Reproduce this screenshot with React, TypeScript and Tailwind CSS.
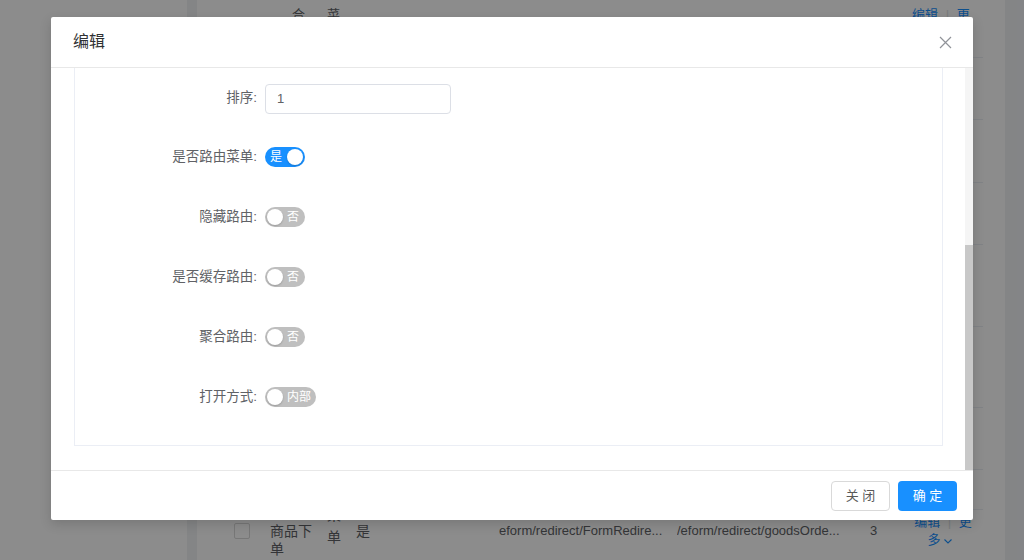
import React from 'react';

type SwitchProps = { on: boolean; label: string; wide?: boolean };

function Toggle({ on, label, wide }: SwitchProps) {
  const width = wide ? 'w-[51px]' : 'w-[40px]';
  if (on) {
    return (
      <div className={`flex h-[20px] ${width} items-center rounded-full bg-[#1890ff]`}>
        <span className="pl-[5px] text-[12px] leading-none text-white">{label}</span>
        <span className="ml-auto mr-[2px] h-[16px] w-[16px] rounded-full bg-white shadow-[0_1px_2px_rgba(0,0,0,0.2)]" />
      </div>
    );
  }
  return (
    <div className={`flex h-[20px] ${width} items-center rounded-full bg-[#bfbfbf]`}>
      <span className="ml-[2px] h-[16px] w-[16px] rounded-full bg-white shadow-[0_1px_2px_rgba(0,0,0,0.2)]" />
      <span className="ml-[4px] text-[12px] leading-none text-white">{label}</span>
    </div>
  );
}

function FormRow({ label, children, first }: { label: string; children: React.ReactNode; first?: boolean }) {
  return (
    <div className={`flex h-[60px] items-center ${first ? 'pt-[3px]' : ''}`}>
      <div className="w-[190px] shrink-0 pr-[8px] text-right text-[13.5px] text-[#606266]">{label}:</div>
      {children}
    </div>
  );
}

const switches = [
  { label: '是否路由菜单', on: true, text: '是' },
  { label: '隐藏路由', on: false, text: '否' },
  { label: '是否缓存路由', on: false, text: '否' },
  { label: '聚合路由', on: false, text: '否' },
  { label: '打开方式', on: false, text: '内部', wide: true },
];

const rowHeights = ['h-[58px]', 'h-[62px]', 'h-[63px]', 'h-[62px]', 'h-[82px]', 'h-[81px]', 'h-[62px]', 'h-[40px]'];

function Chevron() {
  return (
    <svg width="10" height="10" viewBox="0 0 10 10" fill="none" className="ml-[2px] inline-block">
      <path d="M1.5 3.5L5 7L8.5 3.5" stroke="#1890ff" strokeWidth="1.1" />
    </svg>
  );
}

function BackgroundTable() {
  return (
    <div className="flex h-full">
      <div className="w-[187px] bg-white" />
      <div className="w-[10px] bg-[#f0f2f5]" />
      <div className="w-[808px] bg-white pl-[16px] pr-[22px]">
        {rowHeights.map((h, i) => (
          <div key={i} className={`${h} border-b border-[#ebeef5] text-[13px] text-[#606266]`}>
            {i === 0 && (
              <div className="flex pt-[5px] leading-[20px]">
                <div className="w-[57px]" />
                <div className="w-[57px] pl-[22px]">合</div>
                <div className="w-[29px]">菜</div>
                <div className="w-[556px]" />
                <div className="w-[62px] text-[#1890ff]">
                  编辑 <span className="px-[4px] text-[#dcdfe6]">|</span> 更
                </div>
              </div>
            )}
          </div>
        ))}
        <div className="flex items-start text-[13px] text-[#606266]">
          <div className="w-[57px] pl-[21px] pt-[13px]">
            <div className="h-[16px] w-[16px] rounded-[2px] border border-[#d9d9d9] bg-white" />
          </div>
          <div className="w-[57px] pt-[12px] leading-[18px]">
            <div className="w-[42px] text-[14px]">商品下单</div>
          </div>
          <div className="w-[29px] -mt-[6px] leading-[22px]">
            <div className="w-[14px] text-[14px]">菜单</div>
          </div>
          <div className="w-[143px] pt-[12px] text-[14px] leading-[18px]">是</div>
          <div className="w-[178px] overflow-hidden whitespace-nowrap pt-[12px] leading-[18px]">eform/redirect/FormRedire...</div>
          <div className="w-[193px] overflow-hidden whitespace-nowrap pt-[12px] leading-[18px]">/eform/redirect/goodsOrde...</div>
          <div className="w-[42px] pt-[12px] leading-[18px]">3</div>
          <div className="w-[62px] pt-[3px] text-center leading-[18px] text-[#1890ff]">
            <div className="whitespace-nowrap">
              编辑 <span className="px-[4px] text-[#dcdfe6]">|</span> 更
            </div>
            <div className="pr-[6px]">
              多<Chevron />
            </div>
          </div>
        </div>
      </div>
      <div className="flex-1 bg-[#f0f2f5]" />
    </div>
  );
}

export default function App() {
  return (
    <div className="relative h-[560px] w-[1024px] overflow-hidden bg-white font-['Liberation_Sans','Noto_Sans_CJK_SC',sans-serif]">
      <BackgroundTable />
      <div className="absolute inset-0 bg-black/45" />

      <div className="absolute left-[51px] top-[17px] flex h-[503px] w-[922px] flex-col rounded-[2px] bg-white shadow-[0_4px_12px_rgba(0,0,0,0.15)]">
        <div className="flex h-[51px] shrink-0 items-center justify-between border-b border-[#e8e8e8] pl-[22px] pr-[21px]">
          <span className="text-[16px] text-[#303133]">编辑</span>
          <svg width="13" height="13" viewBox="0 0 13 13" fill="none">
            <path d="M1 1L12 12M12 1L1 12" stroke="#909399" strokeWidth="1.2" />
          </svg>
        </div>

        <div className="flex min-h-0 flex-1">
          <div className="flex min-w-0 flex-1 flex-col justify-end overflow-hidden pb-[24px] pl-[23px] pr-[22px]">
            <div className="shrink-0 border border-[#ebeef5] pb-[18px] pt-[4px]">
              <FormRow label="排序" first>
                <div className="flex h-[30px] w-[186px] items-center rounded-[4px] border border-[#dcdfe6] pl-[11px] text-[13px] text-[#606266]">
                  1
                </div>
              </FormRow>
              {switches.map(s => (
                <FormRow key={s.label} label={s.label}>
                  <Toggle on={s.on} label={s.text} wide={s.wide} />
                </FormRow>
              ))}
            </div>
          </div>
          <div className="flex w-[8px] shrink-0 flex-col bg-[#f5f5f5]">
            <div className="h-[177px]" />
            <div className="flex-1 bg-[#c8c8c8]" />
          </div>
        </div>

        <div className="flex h-[50px] shrink-0 items-center justify-end gap-[8px] border-t border-[#e8e8e8] pr-[16px]">
          <button className="h-[30px] w-[59px] rounded-[4px] border border-[#d9d9d9] bg-white text-[13px] text-[#595959]">
            关 闭
          </button>
          <button className="h-[30px] w-[59px] rounded-[4px] bg-[#1890ff] text-[13px] text-white">确 定</button>
        </div>
      </div>
    </div>
  );
}
